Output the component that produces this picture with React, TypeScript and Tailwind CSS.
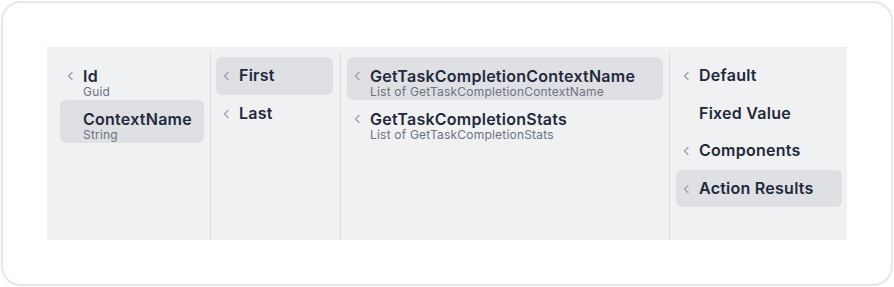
import React from 'react';

type Item = { label: string; sub?: string; chevron?: boolean; active?: boolean };

const columns: { width: string; pad: string; items: Item[] }[] = [
  {
    width: 'w-[163px]',
    pad: 'pl-[13px] pr-[6px]',
    items: [
      { label: 'Id', sub: 'Guid', chevron: true },
      { label: 'ContextName', sub: 'String', active: true },
    ],
  },
  {
    width: 'w-[130px]',
    pad: 'pl-[5px] pr-[7px]',
    items: [
      { label: 'First', chevron: true, active: true },
      { label: 'Last', chevron: true },
    ],
  },
  {
    width: 'w-[329px]',
    pad: 'px-[6px]',
    items: [
      { label: 'GetTaskCompletionContextName', sub: 'List of GetTaskCompletionContextName', chevron: true, active: true },
      { label: 'GetTaskCompletionStats', sub: 'List of GetTaskCompletionStats', chevron: true },
    ],
  },
  {
    width: 'flex-1',
    pad: 'pl-[6px] pr-[5px]',
    items: [
      { label: 'Default', chevron: true },
      { label: 'Fixed Value' },
      { label: 'Components', chevron: true },
      { label: 'Action Results', chevron: true, active: true },
    ],
  },
];

const Chevron = () => (
  <svg width="8" height="10" viewBox="0 0 8 10" className="text-[#9ca3af]">
    <polyline points="5,1.5 1.5,5 5,8.5" fill="none" stroke="currentColor" strokeWidth="1.4" strokeLinecap="round" strokeLinejoin="round" />
  </svg>
);

const Row: React.FC<{ item: Item }> = ({ item }) => (
  <div
    className={`flex rounded-[6px] pl-[7px] ${item.sub ? 'h-[43px] pt-[10px]' : 'h-[37.5px] pt-[7px]'} ${
      item.active ? 'bg-[#dfe0e4]' : ''
    }`}
  >
    <div className={`w-[16px] shrink-0 flex ${item.sub ? 'pt-[4px]' : 'pt-[7px]'}`}>
      {item.chevron && <Chevron />}
    </div>
    <div className="flex flex-col">
      <span
        className={`text-[16px] tracking-[0.25px] font-semibold text-[#1e293b] whitespace-nowrap ${
          item.sub ? 'leading-[19px]' : 'leading-[22px]'
        }`}
      >
        {item.label}
      </span>
      {item.sub && (
        <span className="text-[12px] tracking-[0.2px] leading-[12px] text-[#6b7280] whitespace-nowrap">{item.sub}</span>
      )}
    </div>
  </div>
);

export default function App() {
  return (
    <div className="w-[894px] h-[287px] bg-white p-px" style={{ fontFamily: 'Inter, "Noto Sans", sans-serif' }}>
      <div className="w-[892px] h-[285px] border-2 border-[#e5e7eb] rounded-[20px] p-[44px]">
        <div className="flex h-[193px] bg-[#f0f1f3]">
          {columns.map((col, i) => (
            <div key={i} className={`${col.width} flex flex-col`}>
              <div className={`flex-1 mt-[5px] pt-[5px] ${i > 0 ? 'border-l border-[#dcdde1]' : ''} ${col.pad}`}>
                {col.items.map(item => (
                  <Row key={item.label} item={item} />
                ))}
              </div>
            </div>
          ))}
        </div>
      </div>
    </div>
  );
}
